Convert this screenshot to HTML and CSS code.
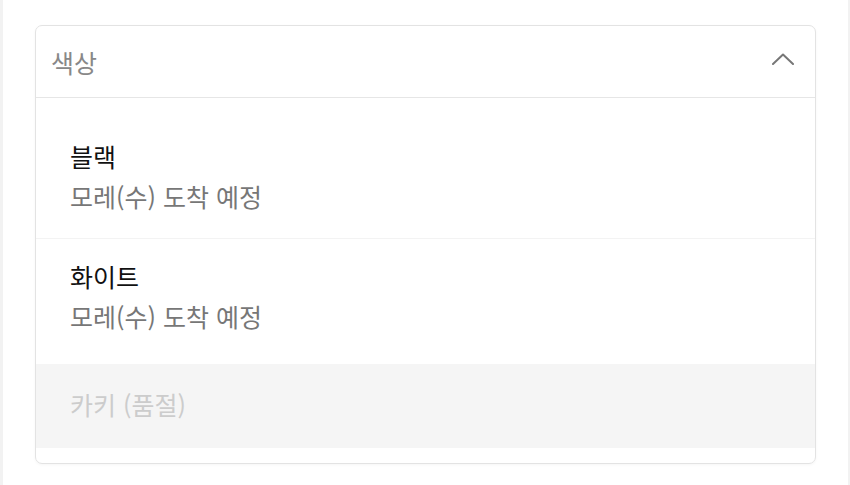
FILE: index.html
```html
<!DOCTYPE html>
<html lang="ko">
<head>
  <meta charset="utf-8">
  <title>색상 선택</title>
  <link rel="stylesheet" href="styles.css">
</head>
<body>
  <div class="page">
    <div class="select">
      <div class="select-head">
        <span class="select-label">색상</span>
        <svg class="chevron" width="22" height="12" viewBox="0 0 22 12">
          <polyline points="1,11 11,1.5 21,11" fill="none" stroke="#777" stroke-width="2" stroke-linecap="round" stroke-linejoin="round"/>
        </svg>
      </div>
      <ul class="options">
        <li class="option">
          <div class="option-name">블랙</div>
          <div class="option-note">모레(수) 도착 예정</div>
        </li>
        <li class="option">
          <div class="option-name">화이트</div>
          <div class="option-note">모레(수) 도착 예정</div>
        </li>
        <li class="option soldout">
          <div class="option-name">카키 (품절)</div>
        </li>
      </ul>
    </div>
  </div>
</body>
</html>
```

FILE: styles.css
```css
body {
  margin: 0;
  background-color: #fff;
  font-family: "Noto Sans CJK KR", "Noto Sans", sans-serif;
}

/* Page frame with thin side rails */
.page {
  width: 850px;
  height: 485px;
  box-sizing: border-box;
  border-left: 3px solid #f2f2f2;
  border-right: 2px solid #f2f2f2;
  padding: 25px 0 0 32px;
}

/* Dropdown box */
.select {
  width: 781px;
  box-sizing: border-box;
  border: 1px solid #e3e3e3;
  border-radius: 7px;
  box-shadow: 0 1px 3px rgba(0, 0, 0, 0.04);
  overflow: hidden;
}

.select-head {
  height: 71px;
  display: flex;
  align-items: center;
  justify-content: space-between;
  padding: 0 21px 0 15px;
  border-bottom: 1px solid #e6e6e6;
}

.select-label {
  font-size: 25px;
  color: #888;
}

.chevron {
  margin-bottom: 6px;
}

/* Option list */
.options {
  list-style: none;
  margin: 0;
  padding: 21px 0 15px;
}

.option {
  padding: 17px 34px 22px;
}

.option:first-child {
  border-bottom: 1px solid #f3f3f3;
}

.option-name {
  font-size: 25px;
  line-height: 40px;
  color: #111;
}

.option-note {
  font-size: 25px;
  line-height: 40px;
  color: #777;
}

.option.soldout {
  margin-top: 6px;
  padding: 20px 34px 24px;
  background-color: #f5f5f5;
}

.option.soldout .option-name {
  color: #ccc;
}
```
